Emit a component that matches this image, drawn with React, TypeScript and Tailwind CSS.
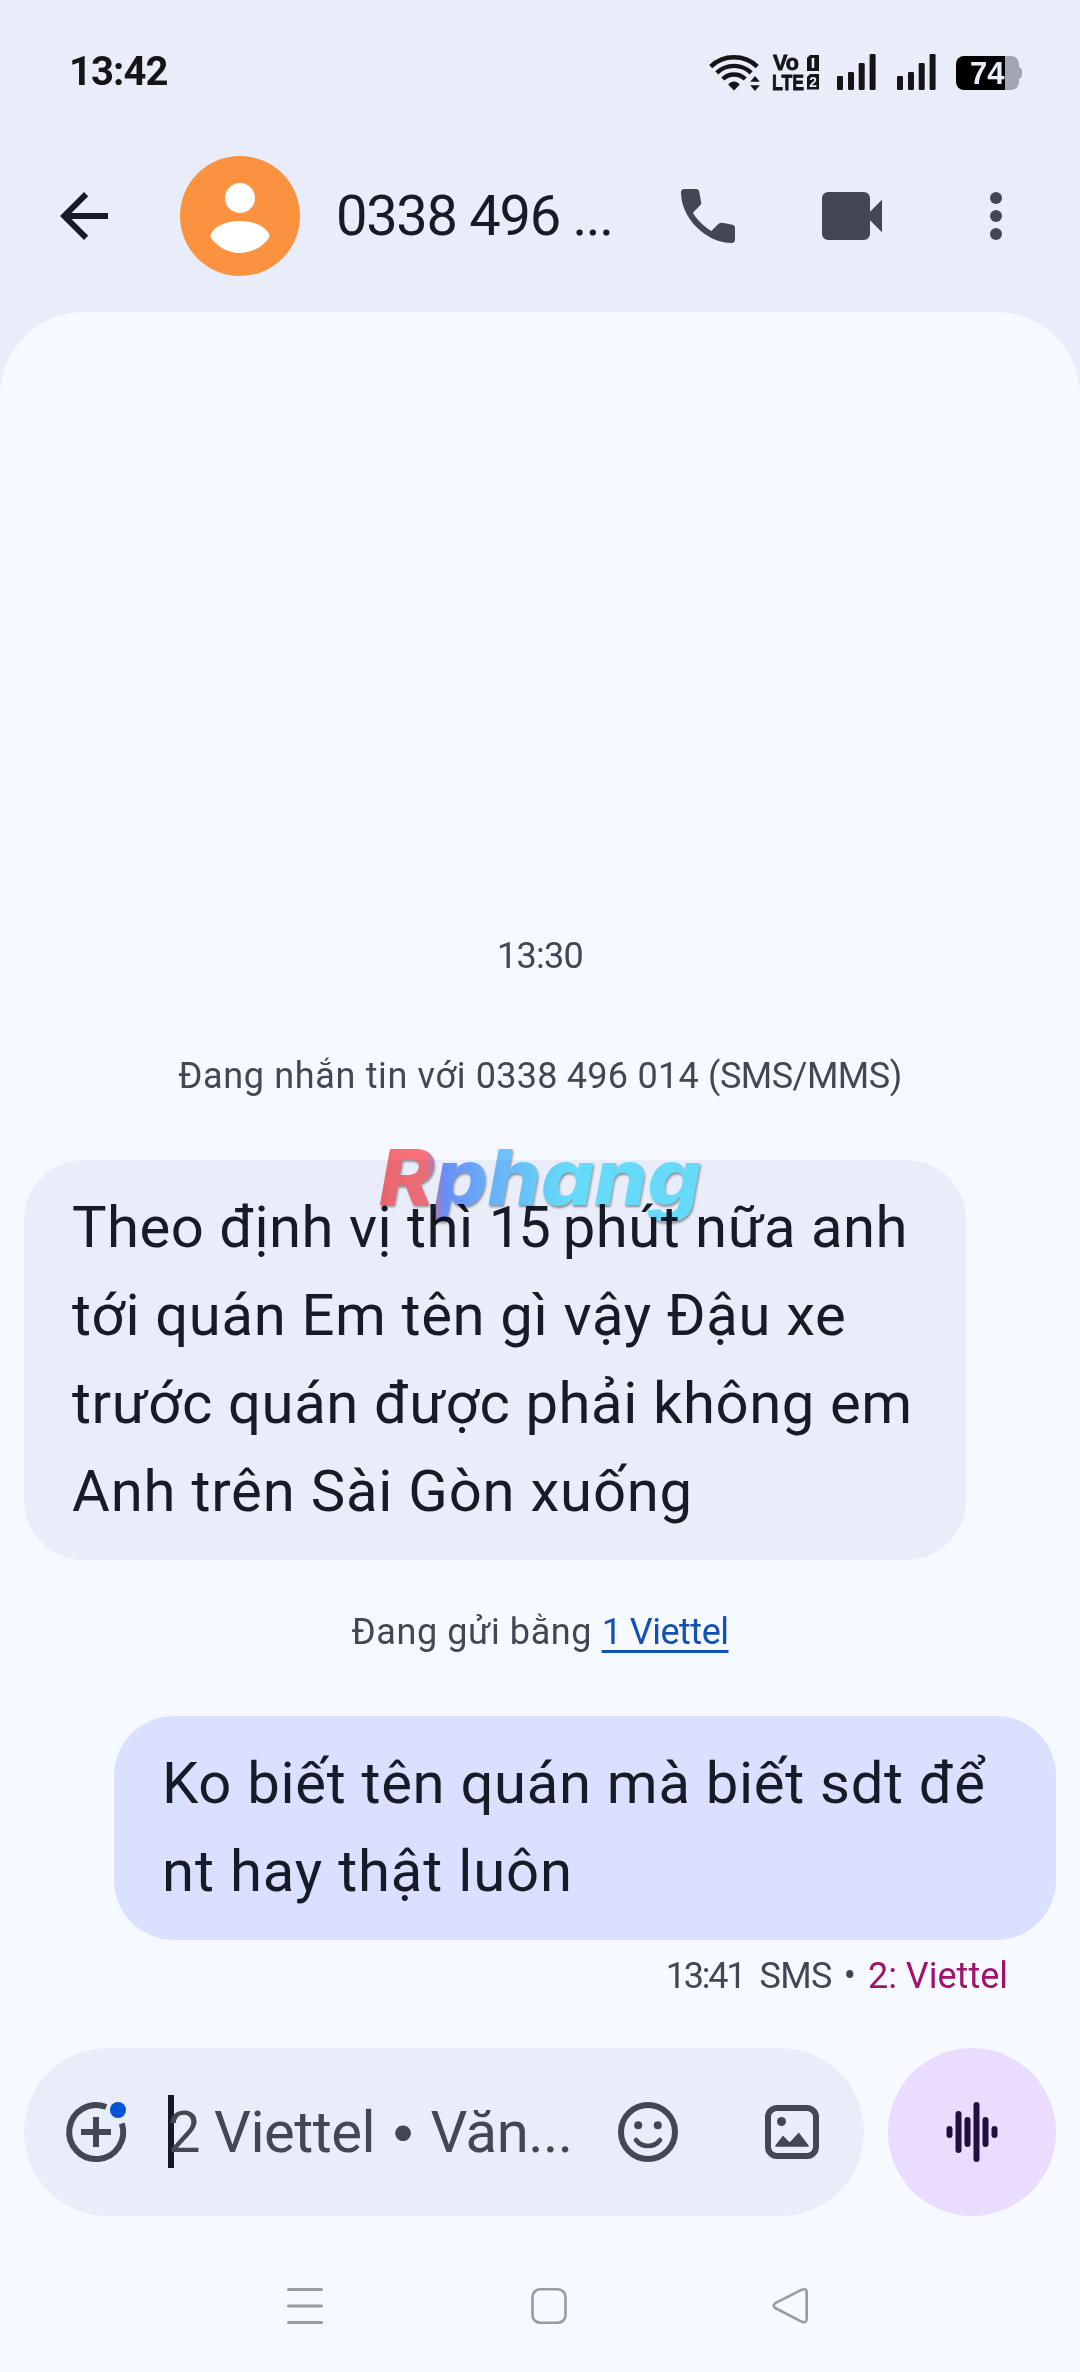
import clsx from "clsx";

type Line = { text: string; tracking: string };

const incoming: Line[] = [
  { text: "Theo định vị thì 15 phút nữa anh", tracking: "tracking-[0.5px]" },
  { text: "tới quán Em tên gì vậy Đậu xe", tracking: "tracking-[0.65px]" },
  { text: "trước quán được phải không em", tracking: "tracking-[0.6px]" },
  { text: "Anh trên Sài Gòn xuống", tracking: "tracking-[0.8px]" },
];

const outgoing: Line[] = [
  { text: "Ko biết tên quán mà biết sdt để", tracking: "tracking-[0.7px]" },
  { text: "nt hay thật luôn", tracking: "tracking-[0.85px]" },
];

function WifiIcon() {
  return (
    <svg width="51" height="37" viewBox="0 0 51 37" fill="none">
      <g stroke="#151518" strokeWidth="4.4">
        <path d="M1.7 12.6C14.5 0.2 35.5 0.2 48.3 12.6" />
        <path d="M7.8 18.8C17.5 9.6 32.5 9.6 42.2 18.8" />
        <path d="M13.8 25C20 18.9 30 18.9 36.2 25" />
      </g>
      <path d="M19.2 30.4C22.4 26.4 27.6 26.4 30.8 30.4L25 36.6Z" fill="#151518" />
      <path d="M41.2 27.8L46 22L50.8 27.8ZM41.2 31.2L46 37L50.8 31.2Z" fill="#151518" />
    </svg>
  );
}

function VolteIcon() {
  return (
    <svg
      width="46"
      height="36"
      viewBox="0 0 46 36"
      fill="#151518"
      className="overflow-visible font-['Liberation_Sans',sans-serif] font-bold"
    >
      <g stroke="#151518" strokeWidth="0.8">
        <text x="0" y="16" fontSize="22" textLength="26" lengthAdjust="spacingAndGlyphs">
          Vo
        </text>
        <text x="-1" y="35.5" fontSize="22" textLength="32" lengthAdjust="spacingAndGlyphs">
          LTE
        </text>
      </g>
      <path d="M37 1H46V17H34V4Z" />
      <path d="M37 20H46V35.5H34V23Z" />
      <rect x="38.7" y="4" width="2.6" height="10" fill="#e9edf9" />
      <text x="36.3" y="33.2" fontSize="15" fill="#e9edf9" textLength="7.6" lengthAdjust="spacingAndGlyphs">
        2
      </text>
    </svg>
  );
}

function SignalIcon() {
  return (
    <svg width="39" height="36" viewBox="0 0 39 36" fill="#151518">
      <rect x="0" y="22" width="6" height="14" rx="1.2" />
      <rect x="11" y="18" width="6" height="18" rx="1.2" />
      <rect x="21.7" y="9" width="6" height="27" rx="1.2" />
      <rect x="32.6" y="0" width="6" height="36" rx="1.2" />
    </svg>
  );
}

function BatteryIcon() {
  return (
    <svg width="66" height="34" viewBox="0 0 66 34">
      <path d="M55 0A8 8 0 0 1 63 8V11C65 12 66 13 66 15V19C66 21 65 22 63 23V26A8 8 0 0 1 55 34H48V0Z" fill="#a3a6b1" />
      <path d="M8 0H49V34H8A8 8 0 0 1 0 26V8A8 8 0 0 1 8 0Z" fill="#000" />
      <text
        x="14"
        y="28.3"
        fontSize="31"
        fill="#e9edf9"
        textLength="34.5"
        lengthAdjust="spacingAndGlyphs"
        className="font-['Liberation_Sans',sans-serif] font-bold"
      >
        74
      </text>
    </svg>
  );
}

function StatusBar() {
  return (
    <div className="flex h-[120px] items-center pt-6 pr-[58px] pl-[69px]">
      <span className="grow text-[40px] font-bold tracking-[-0.9px] text-[#151518]">13:42</span>
      <WifiIcon />
      <div className="ml-[13px]">
        <VolteIcon />
      </div>
      <div className="ml-[18px]">
        <SignalIcon />
      </div>
      <div className="ml-[21px]">
        <SignalIcon />
      </div>
      <div className="ml-5 pt-[2px]">
        <BatteryIcon />
      </div>
    </div>
  );
}

function Header() {
  return (
    <header className="flex h-48 items-center pl-12">
      <svg width="72" height="72" viewBox="0 0 24 24" fill="#171a27">
        <path d="M20 11H7.83l5.59-5.59L12 4l-8 8 8 8 1.41-1.41L7.83 13H20v-2z" />
      </svg>
      <svg className="ml-[60px]" width="120" height="120" viewBox="0 0 120 120">
        <circle cx="60" cy="60" r="60" fill="#fb9240" />
        <circle cx="60" cy="42" r="15" fill="#fff" />
        <path
          d="M60 65C75 65 86 71 89 78Q90 80 89 82C83 90 73 97 60 97C47 97 37 90 31 82Q30 80 31 78C34 71 45 65 60 65Z"
          fill="#fff"
        />
      </svg>
      <h1 className="ml-9 w-[336px] text-[56px] leading-none tracking-[-1.3px] whitespace-nowrap text-[#171a27]">
        0338 496 ...
      </h1>
      <svg width="72" height="72" viewBox="0 0 24 24" fill="#434654">
        <path d="M19.95 21q-3.125 0-6.175-1.362t-5.55-3.863-3.862-5.55T3 4.05q0-.45.3-.75t.75-.3H8.1q.35 0 .625.238t.325.562l.65 3.5q.05.4-.025.675T9.4 8.45L6.975 10.9q.5.925 1.187 1.787t1.513 1.663q.775.775 1.625 1.438T13.1 17l2.35-2.35q.225-.225.588-.337t.712-.063l3.45.7q.35.1.575.363T21 15.9v4.05q0 .45-.3.75t-.75.3z" />
      </svg>
      <svg className="ml-[72px]" width="72" height="72" viewBox="0 0 24 24" fill="#434654">
        <path d="M4 4h12a2 2 0 0 1 2 2v4.6l4-4v10.8l-4-4V18a2 2 0 0 1-2 2H4a2 2 0 0 1-2-2V6a2 2 0 0 1 2-2z" />
      </svg>
      <svg className="ml-[72px]" width="72" height="72" viewBox="0 0 24 24" fill="#434654">
        <circle cx="12" cy="6" r="2" />
        <circle cx="12" cy="12" r="2" />
        <circle cx="12" cy="18" r="2" />
      </svg>
    </header>
  );
}

function Bubble({ lines, mine = false }: { lines: Line[]; mine?: boolean }) {
  return (
    <div
      className={clsx(
        "w-[942px] rounded-[60px] pt-[23px] pb-[25px] pl-12 text-[58px] leading-[88px] whitespace-nowrap text-[#171a27]",
        mine ? "self-end bg-[#dae0ff]" : "bg-[#e9edf9]"
      )}
    >
      {lines.map((line) => (
        <p key={line.text} className={line.tracking}>
          {/* numbers are set a little tighter than words */}
          {line.text.split(/(\d+)/).map((part, i) =>
            i % 2 ? (
              <span key={i} className="tracking-[-3px]">
                {part}
              </span>
            ) : (
              part
            )
          )}
        </p>
      ))}
    </div>
  );
}

// Logo stamped over the conversation
function Watermark() {
  return (
    <svg
      className="absolute top-[1130px] left-[370px] font-['Inter',sans-serif] font-extrabold italic mix-blend-multiply"
      width="350"
      height="110"
      viewBox="0 0 350 110"
    >
      <defs>
        <linearGradient id="brand" gradientUnits="userSpaceOnUse" x1="10" y1="0" x2="200" y2="0">
          <stop offset="0" stopColor="#ff6e72" />
          <stop offset="0.24" stopColor="#ff757a" />
          <stop offset="0.34" stopColor="#7299ff" />
          <stop offset="0.6" stopColor="#74c0ff" />
          <stop offset="1" stopColor="#6fecff" />
        </linearGradient>
      </defs>
      <text
        x="9"
        y="75"
        fontSize="77"
        fill="url(#brand)"
        textLength="322"
        lengthAdjust="spacingAndGlyphs"
        className="drop-shadow-[1px_2px_1px_rgba(0,0,0,0.4)]"
      >
        Rphang
      </text>
    </svg>
  );
}

function Composer() {
  return (
    <div className="mt-12 flex items-center gap-6 px-6">
      <div className="flex h-[168px] w-[840px] items-center rounded-full bg-[#e9edf9] pr-[45px] pl-[42px]">
        <svg className="overflow-visible" width="60" height="60" viewBox="0 0 60 60" fill="none">
          <path d="M40.2 5A27 27 0 1 0 55.8 21.5" stroke="#434654" strokeWidth="6" />
          <path d="M30 15V45M15 30H45" stroke="#434654" strokeWidth="6" />
          <circle cx="52" cy="8" r="8" fill="#0255d8" />
        </svg>
        <div className="relative ml-[42px] flex h-[73px] grow items-center">
          <span className="absolute -top-px left-0 h-full w-[6px] bg-[#171a27]" />
          <span className="relative text-[58px] leading-none tracking-[-0.5px] whitespace-nowrap text-[#434654]">
            2 Viettel <span className="relative -top-1 font-['Inter',sans-serif] text-[50px]">•</span> Văn...
          </span>
        </div>
        <svg width="60" height="60" viewBox="0 0 60 60" fill="none">
          <circle cx="30" cy="30" r="27" stroke="#434654" strokeWidth="6" />
          <circle cx="20.2" cy="23.3" r="4" fill="#434654" />
          <circle cx="39.8" cy="23.3" r="4" fill="#434654" />
          <path d="M18 38C24 46 36 46 42 38" stroke="#434654" strokeWidth="4.6" strokeLinecap="round" />
        </svg>
        <svg className="ml-[87px]" width="54" height="54" viewBox="0 0 54 54" fill="none">
          <rect x="3" y="3" width="48" height="48" rx="9" stroke="#434654" strokeWidth="6" />
          <circle cx="16.5" cy="16.5" r="4.5" fill="#434654" />
          <path
            d="M11 41L18 31.7L24.7 38.6L33.7 28.7L43 41Z"
            fill="#434654"
            stroke="#434654"
            strokeWidth="1.6"
            strokeLinejoin="round"
          />
        </svg>
      </div>
      <div className="flex size-[168px] items-center justify-center rounded-full bg-[#eadcff]">
        <svg width="54" height="60" viewBox="0 0 54 60" stroke="#1f0f3e" strokeWidth="6" strokeLinecap="round">
          <path d="M4.5 27V33M13.5 12V48M22.5 18V42M31.5 3V57M40.5 18V42M49.5 27V33" />
        </svg>
      </div>
    </div>
  );
}

function NavBar() {
  return (
    <nav className="mt-[71px] flex items-center pl-[286px]">
      <svg width="38" height="38" viewBox="0 0 38 38" stroke="#9a9b9f" strokeWidth="3" strokeLinecap="round">
        <path d="M2.5 2.5H35.5M2.5 19H35.5M2.5 35.5H35.5" />
      </svg>
      <svg className="ml-[206px]" width="38" height="38" viewBox="0 0 38 38" fill="none" stroke="#9a9b9f" strokeWidth="2.6">
        <rect x="2.5" y="2.3" width="33" height="33.4" rx="7.5" />
      </svg>
      <svg
        className="ml-[204px]"
        width="38"
        height="38"
        viewBox="0 0 38 38"
        fill="none"
        stroke="#9a9b9f"
        strokeWidth="2.6"
        strokeLinejoin="round"
      >
        <path d="M30 2.7Q34.5 1 34.7 5V32Q34.5 36.5 30 34.8L3.2 21Q0 18.6 3.2 16.2Z" />
      </svg>
    </nav>
  );
}

export default function App() {
  return (
    <div className="relative h-[2372px] w-[1080px] overflow-hidden bg-[#e9edf9] font-['Roboto','Noto_Sans',sans-serif]">
      <StatusBar />
      <Header />
      <main className="flex h-[2060px] flex-col rounded-t-[84px] bg-[#f6f9ff] pt-[620px] text-[36px] leading-[48px] text-[#434654]">
        <p className="text-center tracking-[-0.7px]">13:30</p>
        <p className="mt-[72px] text-center tracking-[0.25px]">
          <span className="tracking-[0.65px]">Đang nhắn tin với </span>0338 496 014{" "}
          <span className="tracking-[-0.5px]">(SMS/MMS)</span>
        </p>

        <div className="mt-[60px] flex flex-col px-6">
          <Bubble lines={incoming} />
          <p className="mt-12 text-center tracking-[0.6px]">
            Đang gửi bằng{" "}
            <span className="tracking-[-0.5px] text-[#1550b4] underline decoration-[3px] underline-offset-[6px] [text-decoration-skip-ink:none]">
              1 Viettel
            </span>
          </p>
          <div className="mt-[60px] flex flex-col">
            <Bubble lines={outgoing} mine />
          </div>
          <p className="mt-3 flex justify-end pr-12 whitespace-pre">
            <span className="tracking-[-2.2px]">13:41</span>
            <span className="ml-[15px] tracking-[-0.6px]">SMS</span>
            <span className="mx-3">•</span>
            <span className="text-[#a0126c]">2: Viettel</span>
          </p>
        </div>

        <Composer />
        <NavBar />
      </main>
      <Watermark />
    </div>
  );
}
